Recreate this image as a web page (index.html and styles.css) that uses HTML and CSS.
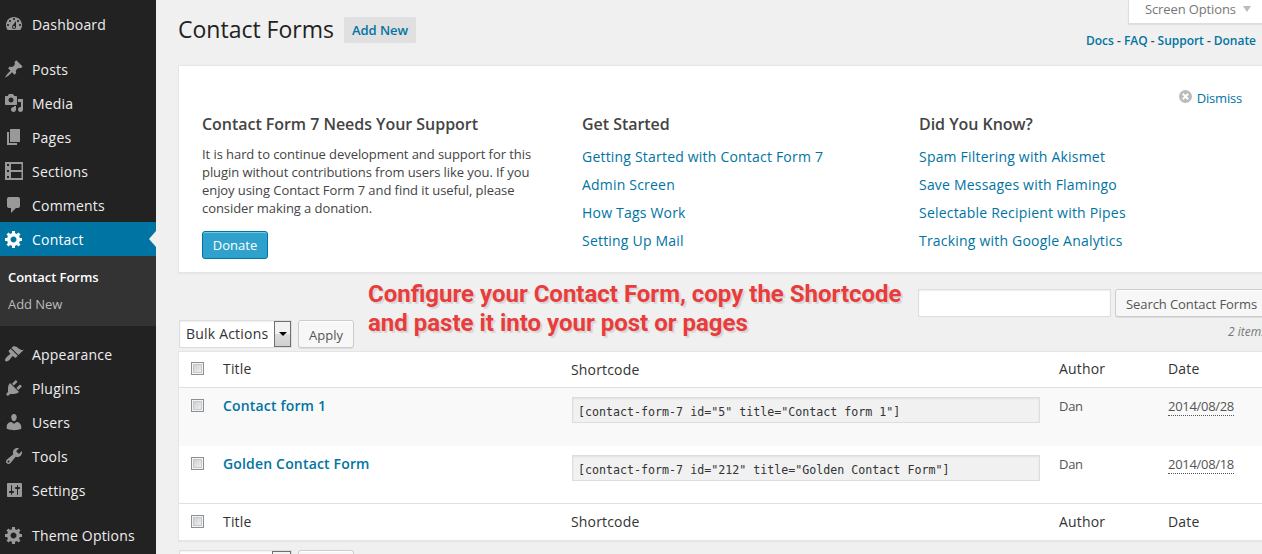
FILE: index.html
```html
<!DOCTYPE html>
<html lang="en">
<head>
<meta charset="utf-8">
<title>Contact Forms</title>
<link rel="stylesheet" href="styles.css">
</head>
<body>
<div class="app">
  <nav class="menu">
    <a class="item"><svg viewBox="0 0 20 20"><path d="M3.76 16h12.48c1.1-1.37 1.76-3.11 1.76-5 0-4.42-3.58-8-8-8s-8 3.58-8 8c0 1.89.66 3.63 1.76 5zM10 4c.55 0 1 .45 1 1s-.45 1-1 1-1-.45-1-1 .45-1 1-1zM6 6c.55 0 1 .45 1 1s-.45 1-1 1-1-.45-1-1 .45-1 1-1zm8 0c.55 0 1 .45 1 1s-.45 1-1 1-1-.45-1-1 .45-1 1-1zm-5.37 5.55L12 7v6c0 1.1-.9 2-2 2s-2-.9-2-2c0-.57.24-1.08.63-1.45zM4 10c.55 0 1 .45 1 1s-.45 1-1 1-1-.45-1-1 .45-1 1-1zm12 0c.55 0 1 .45 1 1s-.45 1-1 1-1-.45-1-1 .45-1 1-1zm-5 3c0-.55-.45-1-1-1s-1 .45-1 1 .45 1 1 1 1-.45 1-1z"/></svg><span>Dashboard</span></a>
    <a class="item gap"><svg viewBox="0 0 20 20"><path d="M10.44 3.02l1.82-1.82 6.36 6.35-1.83 1.82c-1.05-.68-2.48-.57-3.41.36l-.75.75c-.92.93-1.04 2.35-.35 3.41l-1.83 1.82-2.41-2.41-2.8 2.79c-.42.42-3.38 2.71-3.8 2.29s1.86-3.39 2.28-3.81l2.79-2.79L4.1 9.36l1.83-1.82c1.05.69 2.48.57 3.4-.36l.75-.75c.93-.92 1.05-2.35.36-3.41z"/></svg><span>Posts</span></a>
    <a class="item"><svg viewBox="0 0 20 20"><path d="M13 11V4c0-.55-.45-1-1-1h-1.67L9 1H5L3.67 3H2c-.55 0-1 .45-1 1v7c0 .55.45 1 1 1h10c.55 0 1-.45 1-1zM7 4.5c1.38 0 2.5 1.12 2.5 2.5S8.38 9.5 7 9.5 4.5 8.38 4.5 7 5.62 4.5 7 4.5zM14 6h5v10.5c0 1.38-1.12 2.5-2.5 2.5S14 17.88 14 16.5s1.12-2.5 2.5-2.5c.17 0 .34.02.5.05V9h-3V6zm-4 8.05V13h2v3.5c0 1.38-1.12 2.5-2.5 2.5S7 17.88 7 16.5 8.12 14 9.5 14c.17 0 .34.02.5.05z"/></svg><span>Media</span></a>
    <a class="item"><svg viewBox="0 0 20 20"><path d="M6 15V2h10v13H6zm-1 1h8v2H3V5h2v11z"/></svg><span>Pages</span></a>
    <a class="item"><svg viewBox="0 0 20 20"><path fill-rule="evenodd" d="M1 1h18v18H1zM7 3v6h10.500V3zM7 11v6h10.500v-6zM3 3v2h2V3zM3 9v2h2V9zM3 15v2h2v-2z"/></svg><span>Sections</span></a>
    <a class="item"><svg viewBox="0 0 20 20"><path d="M5 2h9c1.100 0 2 .9 2 2v7c0 1.100-.9 2-2 2h-2l-5 5v-5H5c-1.100 0-2-.9-2-2V4c0-1.100.9-2 2-2z"/></svg><span>Comments</span></a>
    <a class="item current"><svg viewBox="0 0 20 20"><path d="M18 12h-2.180c-.17.7-.44 1.350-.81 1.930l1.540 1.540-2.100 2.100-1.540-1.540c-.58.36-1.230.63-1.910.79V19H8v-2.180c-.68-.16-1.330-.43-1.910-.79l-1.540 1.540-2.120-2.120 1.540-1.540c-.36-.58-.63-1.230-.79-1.910H1V9.030h2.170c.16-.7.44-1.350.8-1.940L2.430 5.550l2.100-2.100 1.540 1.540c.58-.37 1.240-.64 1.930-.81V2h3v2.180c.68.16 1.330.43 1.910.79l1.540-1.540 2.120 2.120-1.540 1.540c.36.59.64 1.240.8 1.940H18V12zm-8.500 1.500c1.660 0 3-1.340 3-3s-1.340-3-3-3-3 1.340-3 3 1.340 3 3 3z"/></svg><span>Contact</span></a>
    <div class="submenu"><a class="active">Contact Forms</a><a>Add New</a></div>
    <a class="item gap"><svg viewBox="0 0 20 20"><path d="M14.480 11.060L7.410 3.990l1.500-1.500c.5-.56 2.300-.47 3.510.32 1.210.8 1.430 1.280 2.910 2.100 1.180.64 2.450 1.260 4.450.85zm-.71.71L6.700 4.700 4.930 6.470c-.39.39-.39 1.020 0 1.410l1.060 1.060c.39.39.39 1.030 0 1.420-.6.6-1.430 1.110-2.210 1.690-.35.26-.7.53-1.010.84C1.430 14.230.4 16.080 1.400 17.070c.99 1 2.840-.03 4.180-1.360.31-.31.58-.66.85-1.020.57-.78 1.080-1.610 1.690-2.210.39-.39 1.020-.39 1.410 0l1.060 1.060c.39.39 1.020.39 1.410 0z"/></svg><span>Appearance</span></a>
    <a class="item"><svg viewBox="0 0 20 20"><path d="M13.110 4.360L9.870 7.600 8 5.730l3.240-3.240c.35-.34 1.050-.2 1.560.32.52.51.66 1.210.31 1.550zm-8 1.770l.91-1.120 9.010 9.010-1.190.84c-.71.71-2.630 1.160-3.820 1.160H6.140L4.900 17.260c-.59.59-1.540.59-2.120 0-.59-.58-.59-1.530 0-2.120l1.240-1.240v-3.880c0-1.130.4-3.190 1.090-3.890zm7.260 3.970l3.240-3.240c.34-.35 1.040-.21 1.550.31.52.51.66 1.210.31 1.550l-3.240 3.250z"/></svg><span>Plugins</span></a>
    <a class="item"><svg viewBox="0 0 20 20"><path d="M10 9.250c-2.270 0-2.730-3.440-2.730-3.440C7 4.020 7.820 2 9.970 2c2.160 0 2.980 2.020 2.710 3.810 0 0-.41 3.440-2.680 3.440zm0 2.570L12.720 10c2.390 0 4.520 2.330 4.520 4.530v2.490s-3.650 1.130-7.240 1.130c-3.650 0-7.240-1.130-7.240-1.130v-2.490c0-2.250 1.940-4.480 4.470-4.480z"/></svg><span>Users</span></a>
    <a class="item"><svg viewBox="0 0 20 20"><path d="M16.680 9.770c-1.340 1.340-3.300 1.670-4.950.99l-5.410 6.520c-.99.99-2.590.99-3.580 0s-.99-2.590 0-3.570l6.520-5.420c-.68-1.650-.35-3.610.99-4.950 1.280-1.280 3.120-1.620 4.720-1.060l-2.890 2.890 2.820 2.820 2.860-2.870c.53 1.580.18 3.390-1.080 4.650zM3.810 16.210c.4.39 1.040.39 1.430 0 .4-.4.4-1.040 0-1.430-.39-.4-1.030-.4-1.430 0-.39.39-.39 1.030 0 1.430z"/></svg><span>Tools</span></a>
    <a class="item"><svg viewBox="0 0 20 20"><path d="M18 16V4c0-.55-.45-1-1-1H4c-.55 0-1 .45-1 1v12c0 .55.45 1 1 1h13c.55 0 1-.45 1-1zM8 11h1c.55 0 1 .45 1 1s-.45 1-1 1H8v1.500c0 .28-.22.5-.5.5s-.5-.22-.5-.5V13H6c-.55 0-1-.45-1-1s.45-1 1-1h1V5.500c0-.28.22-.5.5-.5s.5.22.5.5V11zm5-2h-1c-.55 0-1-.45-1-1s.45-1 1-1h1V5.500c0-.28.22-.5.5-.5s.5.22.5.5V7h1c.55 0 1 .45 1 1s-.45 1-1 1h-1v5.500c0 .28-.22.5-.5.5s-.5-.22-.5-.5V9z"/></svg><span>Settings</span></a>
    <a class="item gap"><svg viewBox="0 0 20 20"><path d="M18 12h-2.180c-.17.7-.44 1.350-.81 1.930l1.540 1.540-2.100 2.100-1.540-1.540c-.58.36-1.230.63-1.910.79V19H8v-2.180c-.68-.16-1.330-.43-1.910-.79l-1.540 1.540-2.120-2.120 1.540-1.540c-.36-.58-.63-1.230-.79-1.910H1V9.030h2.170c.16-.7.44-1.350.8-1.940L2.430 5.550l2.100-2.100 1.540 1.540c.58-.37 1.240-.64 1.930-.81V2h3v2.180c.68.16 1.330.43 1.910.79l1.540-1.540 2.120 2.120-1.540 1.540c.36.59.64 1.240.8 1.940H18V12zm-8.500 1.500c1.660 0 3-1.340 3-3s-1.340-3-3-3-3 1.340-3 3 1.340 3 3 3z"/></svg><span>Theme Options</span></a>
  </nav>
  <main class="content">
    <header class="head">
      <h1>Contact Forms</h1>
      <a class="add-new">Add New</a>
      <div class="meta">
        <div class="screen-options"><span>Screen Options</span><i class="triangle"></i></div>
        <div class="docs"><a>Docs</a> - <a>FAQ</a> - <a>Support</a> - <a>Donate</a></div>
      </div>
    </header>
    <section class="panel">
      <div class="dismiss"><svg viewBox="0 0 12 12"><circle cx="6" cy="6" r="6" fill="#bbb"/><path d="M3.500 3.500l5 5M8.500 3.500l-5 5" stroke="#fff" stroke-width="1.800"/></svg><a>Dismiss</a></div>
      <div class="panel-cols">
        <div>
          <h3>Contact Form 7 Needs Your Support</h3>
          <p>It is hard to continue development and support for this<br>plugin without contributions from users like you. If you<br>enjoy using Contact Form 7 and find it useful, please<br>consider making a donation.</p>
          <a class="donate">Donate</a>
        </div>
        <div>
          <h3>Get Started</h3>
          <ul><li>Getting Started with Contact Form 7</li><li>Admin Screen</li><li>How Tags Work</li><li>Setting Up Mail</li></ul>
        </div>
        <div>
          <h3>Did You Know?</h3>
          <ul><li>Spam Filtering with Akismet</li><li>Save Messages with Flamingo</li><li>Selectable Recipient with Pipes</li><li>Tracking with Google Analytics</li></ul>
        </div>
      </div>
    </section>
    <div class="toolbar">
      <div class="bulk">
        <div class="select"><span>Bulk Actions</span><b class="drop"></b></div>
        <a class="button">Apply</a>
      </div>
      <p class="callout">Configure your Contact Form, copy the Shortcode<br>and paste it into your post or pages</p>
      <div class="search">
        <div class="search-row"><div class="search-input"></div><a class="button search-btn">Search Contact Forms</a></div>
        <div class="count">2 items</div>
      </div>
    </div>
    <div class="table">
      <div class="row label top"><i class="check"></i><span>Title</span><span class="sc">Shortcode</span><span>Author</span><span>Date</span></div>
      <div class="row form alt"><i class="check"></i><a class="name">Contact form 1</a><div class="code">[contact-form-7 id="5" title="Contact form 1"]</div><span>Dan</span><span><abbr>2014/08/28</abbr></span></div>
      <div class="row form"><i class="check"></i><a class="name">Golden Contact Form</a><div class="code">[contact-form-7 id="212" title="Golden Contact Form"]</div><span>Dan</span><span><abbr>2014/08/18</abbr></span></div>
      <div class="row label bottom"><i class="check"></i><span>Title</span><span>Shortcode</span><span>Author</span><span>Date</span></div>
    </div>
    <div class="bulk lower">
      <div class="select"></div>
      <a class="button"></a>
    </div>
  </main>
</div>
</body>
</html>
```
FILE: styles.css
```css
* { box-sizing: border-box; }
body { margin: 0; background: #f0f0f0; color: #444; font: 13px/18px "Open Sans", sans-serif; }
h1, h3, p, ul { margin: 0; padding: 0; list-style: none; }
a, li { color: #0074a2; }
.app { display: flex; height: 554px; overflow: hidden; white-space: nowrap; }

.menu { width: 156px; flex: none; background: #222; padding-top: 7px; }
.item { display: flex; align-items: center; height: 34px; padding-left: 4px; gap: 8px; color: #eee; font-size: 14px; letter-spacing: .2px; }
.item span { padding-top: 2px; }
.item svg { width: 20px; height: 20px; flex: none; fill: #999; }
.item.gap { margin-top: 11px; }
.item.current { position: relative; background: #0074a2; color: #fff; }
.item.current svg { fill: #fff; }
.item.current::after { content: ""; position: absolute; right: 0; top: 9px; border: 8px solid transparent; border-left: 0; border-right: 7px solid #f0f0f0; }
.submenu { height: 70px; background: #333; padding: 8px; display: flex; flex-direction: column; }
.submenu a { height: 27px; line-height: 27px; color: #bbb; letter-spacing: -.06px; }
.submenu .active { color: #fff; font-weight: 600; }

.content { flex: 1; min-width: 0; overflow: hidden; padding-left: 22px; }
.head { display: flex; height: 65px; }
h1 { font-size: 23px; font-weight: 400; line-height: 30px; color: #222; padding-top: 14px; width: 166px; }
.add-new { height: 26px; line-height: 26px; margin-top: 17px; padding: 0 8px; width: 72px; background: #e0e0e0; font-weight: 600; border-radius: 1px; letter-spacing: -.05px; }
.meta { margin-left: auto; display: flex; flex-direction: column; align-items: flex-end; }
.screen-options { display: flex; align-items: center; gap: 7px; width: 134px; height: 24px; padding: 0 0 6px 16px; background: #fff; border: solid #ddd; border-width: 0 0 1px 1px; color: #777; box-shadow: 0 1px 1px #0001; letter-spacing: -.12px; }
.triangle { border: solid transparent; border-width: 6px 4px 0; border-top-color: #bbb; }
.docs { font-size: 12px; font-weight: 600; padding: 8px 6px 0 0; letter-spacing: -.03px; }

.panel { height: 208px; background: #fff; border: 1px solid #e5e5e5; border-right: 0; box-shadow: 0 1px 1px #0000000a; padding: 23px 0 0 23px; }
.dismiss { display: flex; align-items: center; justify-content: flex-end; gap: 5px; padding-right: 20px; height: 18px; letter-spacing: -.2px; }
.dismiss svg { width: 13px; height: 13px; margin-bottom: 3px; }
.panel-cols { display: grid; grid-template-columns: 380px 337px 1fr; padding-top: 7px; }
h3 { font-size: 16px; line-height: 20px; font-weight: 600; letter-spacing: -.04px; }
.panel p { padding-top: 11px; letter-spacing: -.07px; }
.panel li { height: 28px; line-height: 20px; font-size: 14px; letter-spacing: .2px; }
.panel ul { padding-top: 13px; }
.donate { display: block; width: 66px; height: 28px; margin-top: 14px; border: 1px solid #0074a2; border-radius: 3px; background: #2ea2cc; box-shadow: inset 0 1px 0 #78c8e6; color: #fff; line-height: 26px; text-align: center; }

.toolbar { display: grid; grid-template-columns: 190px 550px 1fr; height: 78px; }
.bulk { display: flex; gap: 6px; padding: 47px 0 0 1px; }
.bulk.lower { padding-top: 9px; }
.select { display: flex; width: 113px; height: 28px; border: 1px solid #ddd; background: #fff; box-shadow: inset 0 1px 2px #00000012; font-size: 14px; line-height: 26px; color: #333; padding-left: 6px; justify-content: space-between; letter-spacing: .2px; }
.drop, .lower .select::after { width: 17px; height: 26px; border: 1px solid #707070; background: linear-gradient(#f2f2f2 48%, #dcdcdc 52%, #cfcfcf); display: flex; justify-content: center; align-items: center; }
.lower .select::after { content: ""; margin-left: auto; }
.drop::after { content: ""; border: solid transparent; border-width: 4px 4px 0; border-top-color: #000; }
.button { display: block; height: 28px; width: 56px; border: 1px solid #ccc; border-radius: 3px; background: #f7f7f7; box-shadow: inset 0 1px 0 #fff, 0 1px 0 #00000014; color: #555; text-align: center; line-height: 28px; }
.callout { font: 700 24px/29px Roboto, sans-serif; color: #e93c3c; padding-top: 7px; text-shadow: 2px 2px 1px #0000001c; }
.search { padding-top: 16px; }
.search-row { display: flex; gap: 4px; }
.search-input { width: 193px; height: 28px; border: 1px solid #ddd; background: #fff; box-shadow: inset 0 1px 2px #00000012; }
.search-btn { width: 153px; flex: none; text-align: left; padding-left: 10px; letter-spacing: -.08px; }
.count { padding: 6px 0 0 310px; font-size: 12px; font-style: italic; color: #777; }

.table { border: 1px solid #e5e5e5; border-right: 0; background: #fff; box-shadow: 0 1px 1px #0000000a; }
.row { display: grid; grid-template-columns: 44px 348px 488px 109px 1fr; color: #555; }
.label { height: 36px; font-size: 14px; line-height: 34px; color: #333; letter-spacing: .17px; }
.top { border-bottom: 1px solid #e1e1e1; }
.bottom { border-top: 1px solid #e1e1e1; height: 37px; line-height: 36px; }
.sc { padding-top: 1px; }
.form { height: 57px; padding-top: 9px; }
.alt { height: 58px; background: #f9f9f9; }
.form > span { letter-spacing: -.3px; }
.check { width: 13px; height: 13px; margin: 10px 0 0 12px; border: 1px solid #8e8f8f; background: linear-gradient(135deg, #c4c7cc, #f6f6f6); box-shadow: inset 0 0 0 1px #f4f4f4, inset 0 0 0 2px #c5c8cc; }
.bottom .check { margin-top: 11px; }
.form .check { margin-top: 2px; }
.name { font-size: 14px; font-weight: 600; letter-spacing: .17px; }
.code { width: 468px; height: 26px; margin-left: 1px; border: 1px solid #ddd; background: #f1f1f1; box-shadow: inset 0 1px 2px #00000012; font: 11.65px/28px "DejaVu Sans Mono", monospace; color: #333; padding-left: 5px; }
abbr { display: inline-block; border-bottom: 1px dotted #555; }
```
